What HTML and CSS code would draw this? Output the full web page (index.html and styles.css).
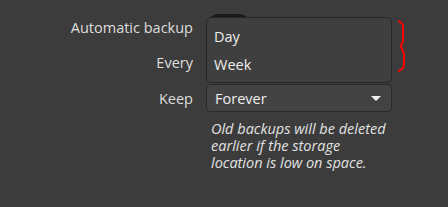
FILE: index.html
```html
<!DOCTYPE html>
<html lang="en">
<head>
  <meta charset="UTF-8">
  <title>Backups</title>
  <link rel="stylesheet" href="styles.css">
</head>
<body>

<div class="prefs">
  <span class="label">Automatic backup</span>
  <div class="row-control">
    <div class="switch"><span class="knob"></span></div>
  </div>

  <span class="label">Every</span>
  <div class="combo open">
    <span>Week</span>
    <svg class="arrow" width="10" height="5" viewBox="0 0 10 5"><path d="M0 0 L10 0 L5 5 Z" fill="#f0f0f0"/></svg>
  </div>

  <span class="label">Keep</span>
  <div class="combo">
    <span>Forever</span>
    <svg class="arrow" width="10" height="5" viewBox="0 0 10 5"><path d="M0 0 L10 0 L5 5 Z" fill="#f0f0f0"/></svg>
  </div>

  <span></span>
  <p class="note">Old backups will be deleted earlier if the storage location is low on space.</p>

  <!-- menu of the "Every" combo, open -->
  <div class="popover">
    <div class="item">Day</div>
    <div class="item">Week</div>
  </div>

  <svg class="brace" width="12" height="54" viewBox="0 0 12 54">
    <path d="M2 1 C5 2 7 3 7 7 L7 20 C7 23 5 24 5 26 C5 29 8 31 8 35 L8 44 C8 49 5 50 2 51" fill="none" stroke="#ff0000" stroke-width="2"/>
  </svg>
</div>

</body>
</html>
```

FILE: styles.css
```css
body {
  margin: 0;
  background-color: #3c3c3c;
  font-family: "Open Sans", "Noto Sans", sans-serif;
  font-size: 14.5px;
  color: #e4e4e4;
}

.prefs {
  position: relative;
  display: grid;
  grid-template-columns: 193px 186px;
  grid-template-rows: 26px 28px 28px auto;
  column-gap: 13px;
  row-gap: 8px;
  padding-top: 14px;
  align-items: center;
}

.label {
  text-align: right;
  color: #dedede;
}

.row-control {
  display: flex;
  align-items: center;
  height: 100%;
}

.switch {
  width: 46px;
  height: 26px;
  box-sizing: border-box;
  border-radius: 13px;
  background-color: #1c1c1c;
  border: 1px solid #161616;
  padding: 2px;
}

.knob {
  display: block;
  width: 20px;
  height: 20px;
  border-radius: 50%;
  background-color: #5a5a5a;
}

.combo {
  height: 28px;
  box-sizing: border-box;
  display: flex;
  align-items: center;
  justify-content: space-between;
  padding: 0 10px 0 8px;
  background-color: #434343;
  border: 1px solid #2a2a2a;
  border-radius: 4px;
  color: #eeeeec;
}

/* the menu lies over it while open */
.combo.open > * {
  visibility: hidden;
}

.note {
  margin: 0;
  padding: 0 0 0 5px;
  font-style: italic;
  line-height: 17px;
  color: #e2e2e2;
  width: 180px;
}

.popover {
  position: absolute;
  left: 206px;
  top: 17px;
  width: 186px;
  height: 66px;
  box-sizing: border-box;
  padding: 5px 0;
  background-color: #3f3f3f;
  border: 1px solid #262626;
  border-radius: 5px;
}

.item {
  height: 28px;
  line-height: 28px;
  padding-left: 7px;
  color: #eeeeec;
}

.brace {
  position: absolute;
  left: 396px;
  top: 20px;
}
```
